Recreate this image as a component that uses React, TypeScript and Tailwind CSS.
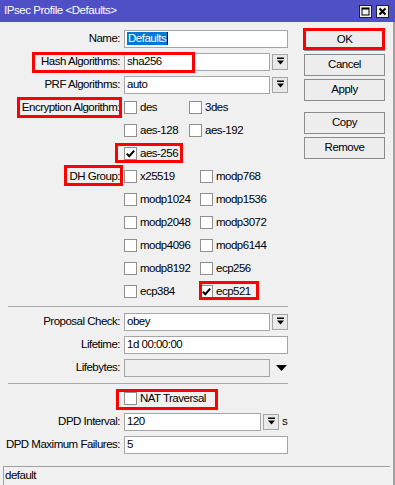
import React from "react";

function DropBtn() {
  return (
    <div className="w-[16px] h-[16px] border border-[#a5a5a5] bg-[#e9e9e9] flex items-center justify-center shrink-0">
      <svg width="9" height="9" viewBox="0 0 9 9">
        <rect x="1" y="0.5" width="7" height="1.5" fill="#000" />
        <path d="M1 3.5 H8 L4.5 7.5 Z" fill="#000" />
      </svg>
    </div>
  );
}

function Box({ checked }: { checked?: boolean }) {
  return (
    <div className="w-[13px] h-[13px] border border-[#8f8f8f] bg-white flex items-center justify-center shrink-0">
      {checked && (
        <svg width="11" height="11" viewBox="0 0 11 11">
          <path d="M1.8 5.6 L4.3 8.2 L9.2 2.6" stroke="#000" strokeWidth="2" fill="none" />
        </svg>
      )}
    </div>
  );
}

function Check({ label, checked, w }: { label: string; checked?: boolean; w?: string }) {
  return (
    <div className={`flex items-center ${w ?? ""}`}>
      <Box checked={checked} />
      <span className="ml-[3px]">{label}</span>
    </div>
  );
}

function Row({ label, children }: { label?: string; children?: React.ReactNode }) {
  return (
    <div className="flex items-center h-[23px]">
      <div className="w-[120px] text-right shrink-0 whitespace-nowrap">{label}</div>
      <div className="ml-[4px] flex items-center">{children}</div>
    </div>
  );
}

function Input({ w, children, gray }: { w: string; children?: React.ReactNode; gray?: boolean }) {
  return (
    <div className={`${w} h-[18px] border border-[#a5a5a5] ${gray ? "bg-[#efefef]" : "bg-white"} flex items-center pl-[2px] shrink-0`}>
      {children}
    </div>
  );
}

function Btn({ label, cls }: { label: string; cls?: string }) {
  return (
    <div className={`h-[22px] w-[81px] border border-[#8c8c8c] bg-[#ededed] flex items-center justify-center ${cls ?? ""}`}>
      {label}
    </div>
  );
}

function Sep({ cls }: { cls: string }) {
  return <div className={`ml-[8px] w-[280px] h-px bg-[#a8a8a8] ${cls}`} />;
}

export default function App() {
  return (
    <div className="relative w-[395px] h-[485px] bg-[#f0f0f0] flex flex-col text-[11.5px] tracking-[-0.5px] text-black font-['Liberation_Sans',Arial,sans-serif] overflow-hidden">
      {/* title bar */}
      <div className="h-[22px] bg-[#4f4fc6] flex items-center justify-between shrink-0">
        <span className="ml-[4px] text-white text-[11.5px] tracking-[-0.45px]">IPsec Profile &lt;Defaults&gt;</span>
        <div className="flex items-center mr-[6px] gap-[4px]">
          <div className="w-[13px] h-[13px] border border-[#222] bg-[#f0f0f0] flex items-center justify-center">
            <svg width="9" height="9" viewBox="0 0 9 9">
              <rect x="1" y="1" width="7" height="7" stroke="#000" strokeWidth="1" fill="none" />
              <rect x="1" y="1" width="7" height="1.5" fill="#000" />
            </svg>
          </div>
          <div className="w-[13px] h-[13px] border border-[#222] bg-[#f0f0f0] flex items-center justify-center">
            <svg width="9" height="9" viewBox="0 0 9 9">
              <path d="M1.5 1.5 L7.5 7.5 M7.5 1.5 L1.5 7.5" stroke="#000" strokeWidth="2" />
            </svg>
          </div>
        </div>
      </div>

      <div className="flex-1 flex flex-col border-r-2 border-[#a3a3a3]">
        <div className="flex flex-1">
          {/* left form */}
          <div className="w-[304px] shrink-0 pt-[5px]">
            <Row label="Name:">
              <Input w="w-[164px]">
                <span className="bg-[#0078d7] text-white leading-[13px] px-[1px]">Defaults</span>
                <span className="w-px h-[13px] bg-black" />
              </Input>
            </Row>
            <Row label="Hash Algorithms:">
              <Input w="w-[146px]">sha256</Input>
              <div className="ml-[2px]"><DropBtn /></div>
            </Row>
            <Row label="PRF Algorithms:">
              <Input w="w-[146px]">auto</Input>
              <div className="ml-[2px]"><DropBtn /></div>
            </Row>
            <Row label="Encryption Algorithm:">
              <Check label="des" w="w-[65px]" />
              <Check label="3des" />
            </Row>
            <Row>
              <Check label="aes-128" w="w-[65px]" />
              <Check label="aes-192" />
            </Row>
            <Row>
              <Check label="aes-256" checked />
            </Row>
            <Row label="DH Group:">
              <Check label="x25519" w="w-[76px]" />
              <Check label="modp768" />
            </Row>
            <Row>
              <Check label="modp1024" w="w-[76px]" />
              <Check label="modp1536" />
            </Row>
            <Row>
              <Check label="modp2048" w="w-[76px]" />
              <Check label="modp3072" />
            </Row>
            <Row>
              <Check label="modp4096" w="w-[76px]" />
              <Check label="modp6144" />
            </Row>
            <Row>
              <Check label="modp8192" w="w-[76px]" />
              <Check label="ecp256" />
            </Row>
            <Row>
              <Check label="ecp384" w="w-[76px]" />
              <Check label="ecp521" checked />
            </Row>

            <Sep cls="mt-[3px] mb-[3px]" />

            <Row label="Proposal Check:">
              <Input w="w-[146px]">obey</Input>
              <div className="ml-[2px]"><DropBtn /></div>
            </Row>
            <Row label="Lifetime:">
              <Input w="w-[164px]">1d 00:00:00</Input>
            </Row>
            <Row label="Lifebytes:">
              <Input w="w-[146px]" gray />
              <svg className="ml-[6px]" width="11" height="6" viewBox="0 0 11 6">
                <path d="M0 0 H11 L5.5 6 Z" fill="#000" />
              </svg>
            </Row>

            <Sep cls="mt-[4px] mb-[3px]" />

            <Row>
              <Check label="NAT Traversal" />
            </Row>
            <Row label="DPD Interval:">
              <Input w="w-[137px]">120</Input>
              <div className="ml-[2px]"><DropBtn /></div>
              <span className="ml-[3px]">s</span>
            </Row>
            <Row label="DPD Maximum Failures:">
              <Input w="w-[164px]">5</Input>
            </Row>
          </div>

          {/* right buttons */}
          <div className="pt-[7px] flex flex-col">
            <Btn label="OK" />
            <Btn label="Cancel" cls="mt-[3px]" />
            <Btn label="Apply" cls="mt-[3px]" />
            <Btn label="Copy" cls="mt-[11px]" />
            <Btn label="Remove" cls="mt-[3px]" />
          </div>
        </div>

        {/* status bar */}
        <div className="h-[19px] ml-[3px] mr-[3px] border-t border-l border-[#a0a0a0] flex items-center pl-[1px] shrink-0">
          default
        </div>
      </div>

      {/* red annotation boxes */}
      <div className="absolute left-[32px] top-[52px] w-[163px] h-[21px] border-[3px] border-[#ff0000]" />
      <div className="absolute left-[17px] top-[97px] w-[105px] h-[21px] border-[3px] border-[#ff0000]" />
      <div className="absolute left-[115px] top-[143px] w-[68px] h-[20px] border-[3px] border-[#ff0000]" />
      <div className="absolute left-[64px] top-[165px] w-[59px] h-[21px] border-[3px] border-[#ff0000]" />
      <div className="absolute left-[199px] top-[281px] w-[60px] h-[19px] border-[3px] border-[#ff0000]" />
      <div className="absolute left-[303px] top-[28px] w-[82px] h-[22px] border-[3px] border-[#ff0000]" />
      <div className="absolute left-[116px] top-[389px] w-[102px] h-[21px] border-[3px] border-[#ff0000]" />
    </div>
  );
}
